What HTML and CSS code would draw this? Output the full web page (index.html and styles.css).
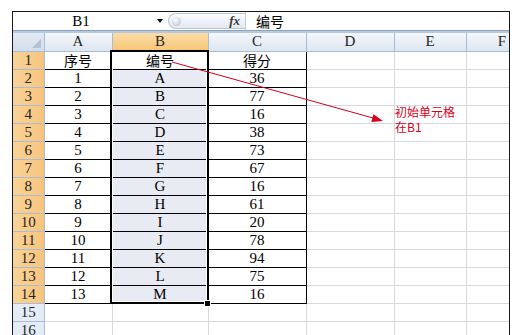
FILE: index.html
```html
<!DOCTYPE html><html>
<head>
<meta charset="UTF-8"/>
<title>编号 - 初始单元格</title>
<link rel="stylesheet" href="styles.css">
</head>
<body>
<section class="sheet">
<div class="formula-bar">
<div class="name-box"><span class="ref">B1</span><span class="drop"></span></div>
<div class="fx-area"><span class="knob"></span><i class="fx">fx</i></div>
<div class="formula zh">编号</div>
</div>
<div class="grid-wrap">
<table class="grid">
<colgroup>
<col class="c-head"><col class="c-a"><col class="c-b"><col class="c-c"><col class="c-d"><col class="c-e"><col class="c-f">
</colgroup>
<tr class="cols">
<th class="corner"><span class="tri"></span></th><th>A</th><th class="on">B</th><th>C</th><th>D</th><th>E</th><th>F</th>
</tr>
<tr><th class="row on">1</th><td class="b zh">序号</td><td class="b zh active">编号</td><td class="b zh">得分</td><td></td><td></td><td></td></tr>
<tr><th class="row on">2</th><td class="b">1</td><td class="b sel">A</td><td class="b">36</td><td></td><td></td><td></td></tr>
<tr><th class="row on">3</th><td class="b">2</td><td class="b sel">B</td><td class="b">77</td><td></td><td></td><td></td></tr>
<tr><th class="row on">4</th><td class="b">3</td><td class="b sel">C</td><td class="b">16</td><td></td><td></td><td></td></tr>
<tr><th class="row on">5</th><td class="b">4</td><td class="b sel">D</td><td class="b">38</td><td></td><td></td><td></td></tr>
<tr><th class="row on">6</th><td class="b">5</td><td class="b sel">E</td><td class="b">73</td><td></td><td></td><td></td></tr>
<tr><th class="row on">7</th><td class="b">6</td><td class="b sel">F</td><td class="b">67</td><td></td><td></td><td></td></tr>
<tr><th class="row on">8</th><td class="b">7</td><td class="b sel">G</td><td class="b">16</td><td></td><td></td><td></td></tr>
<tr><th class="row on">9</th><td class="b">8</td><td class="b sel">H</td><td class="b">61</td><td></td><td></td><td></td></tr>
<tr><th class="row on">10</th><td class="b">9</td><td class="b sel">I</td><td class="b">20</td><td></td><td></td><td></td></tr>
<tr><th class="row on">11</th><td class="b">10</td><td class="b sel">J</td><td class="b">78</td><td></td><td></td><td></td></tr>
<tr><th class="row on">12</th><td class="b">11</td><td class="b sel">K</td><td class="b">94</td><td></td><td></td><td></td></tr>
<tr><th class="row on">13</th><td class="b">12</td><td class="b sel">L</td><td class="b">75</td><td></td><td></td><td></td></tr>
<tr><th class="row on">14</th><td class="b">13</td><td class="b sel">M</td><td class="b">16</td><td></td><td></td><td></td></tr>
<tr><th class="row">15</th><td></td><td></td><td></td><td></td><td></td><td></td></tr>
<tr><th class="row">16</th><td></td><td></td><td></td><td></td><td></td><td></td></tr>
</table>
<div class="selection"></div>
<div class="fill-handle"></div>
<svg class="arrow" width="496" height="303" viewBox="0 0 496 303">
<line x1="159" y1="29" x2="360" y2="85" stroke="#d8001c" stroke-width="1"/>
<polygon points="370,88 358.3,88.9 360.5,81.2" fill="#d8001c"/>
</svg>
<div class="note zh">初始单元格<br>在B1</div>
</div>
</section>
</body>
</html>
```

FILE: styles.css
```css
body {
    margin: 0;
    background: #fff;
    font-family: "Liberation Serif", "Noto Sans CJK SC", serif;
    color: #000;
}
.zh {
    font-family: "Noto Sans CJK SC", sans-serif;
}

.sheet {
    margin: 11px 0 0 12px;
    width: 498px;
    box-sizing: border-box;
    border-left: 1px solid #1a1a1a;
    border-right: 1px solid #1a1a1a;
}

/* formula bar */
.formula-bar {
    display: flex;
    height: 18px;
    border-top: 1px solid #1a1a1a;
    border-bottom: 1px solid #8ea3bf;
    background: #fff;
}
.name-box {
    width: 155px;
    display: flex;
    align-items: center;
}
.ref {
    flex: 1;
    text-align: center;
    font-size: 15px;
    line-height: 18px;
    padding-right: 8px;
}
.drop {
    width: 0;
    height: 0;
    margin-right: 5px;
    border-left: 3px solid transparent;
    border-right: 3px solid transparent;
    border-top: 4px solid #111;
}
.fx-area {
    width: 76px;
    margin: 1px 0;
    display: flex;
    align-items: center;
    justify-content: space-between;
    border: 1px solid #b9c5d6;
    border-right: none;
    border-radius: 8px 0 0 8px;
    background: linear-gradient(#fbfcfe, #e2e8f1);
}
.knob {
    width: 9px;
    height: 9px;
    margin-left: 3px;
    border-radius: 50%;
    background: radial-gradient(circle at 40% 35%, #ffffff, #aeb8c6);
}
.fx {
    font-family: "Liberation Serif", serif;
    font-weight: bold;
    font-size: 13px;
    color: #3a3a3a;
    margin-right: 5px;
}
.formula {
    flex: 1;
    border-left: 1px solid #c3ccd8;
    padding-left: 10px;
    font-size: 14px;
    line-height: 18px;
}

/* grid */
.grid-wrap {
    position: relative;
    overflow: hidden;
    height: 303px;
    border-top: 2px solid #b4c8e3;
}
.grid {
    table-layout: fixed;
    border-collapse: collapse;
    width: 525px;
    font-size: 15px;
}
.c-head { width: 31px; }
.c-a { width: 68px; }
.c-b { width: 96px; }
.c-c { width: 98px; }
.c-d { width: 88px; }
.c-e { width: 72px; }
.c-f { width: 72px; }

.grid tr {
    height: 18px;
}
.grid th,
.grid td {
    padding: 0;
    text-align: center;
    line-height: 17px;
    white-space: nowrap;
    overflow: hidden;
}
.grid td {
    border: 1px solid #d5d9e0;
}
.grid th {
    font-weight: normal;
    color: #262626;
    border: 1px solid #a9bdd6;
}
.cols th {
    border-top: none;
    background: linear-gradient(#f4f7fb, #dde5f0);
}
.cols th.on {
    background: linear-gradient(#fbdca6, #f6c676);
}
.corner {
    position: relative;
    border-left: none !important;
    background: linear-gradient(#e3eaf4, #d3ddeb) !important;
}
.tri {
    position: absolute;
    right: 3px;
    bottom: 3px;
    width: 0;
    height: 0;
    border-left: 9px solid transparent;
    border-bottom: 9px solid #b3c1d4;
}
.row {
    border-left: none !important;
    background: #e4ecf7;
}
.row.on {
    background: linear-gradient(90deg, #f9d397, #f7c47e);
}
.grid td.b {
    border: 1px solid #000;
}
.grid td.zh {
    font-size: 14px;
}
.grid td.sel {
    background: #e8eaf4;
}

.selection {
    position: absolute;
    left: 97px;
    top: 17px;
    width: 99px;
    height: 254px;
    box-sizing: border-box;
    border: 2px solid #000;
    box-shadow: inset 0 0 0 1px #fff;
}
.fill-handle {
    position: absolute;
    left: 191px;
    top: 267px;
    width: 5px;
    height: 5px;
    background: #000;
    border: 1px solid #fff;
}
.arrow {
    position: absolute;
    left: 0;
    top: 0;
}
.note {
    position: absolute;
    left: 382px;
    top: 71px;
    font-size: 12px;
    line-height: 15px;
    color: #d8001c;
}
```
